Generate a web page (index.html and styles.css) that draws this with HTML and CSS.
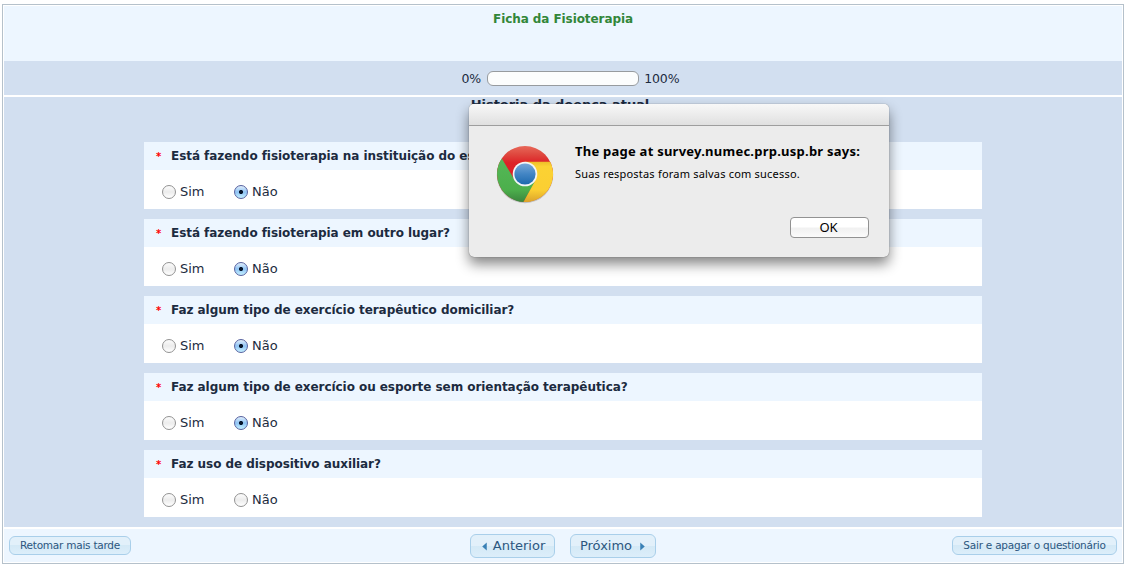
FILE: index.html
```html
<!DOCTYPE html>
<html lang="pt-BR">
<head>
<meta charset="utf-8">
<title>Ficha da Fisioterapia</title>
<link rel="stylesheet" href="styles.css">
</head>
<body>
<div class="survey">
  <header class="survey-header"><h1 class="survey-title">Ficha da Fisioterapia</h1></header>
  <div class="progress"><span class="progress-min">0%</span><span class="progress-track"></span><span class="progress-max">100%</span></div>
  <main class="group">
    <h2 class="group-title">Historia da doença atual</h2>
    <section class="question">
      <h3 class="question-head"><span class="required">*</span><span>Está fazendo fisioterapia na instituição do estudo?</span></h3>
      <div class="answers"><label class="answer"><span class="radio"></span>Sim</label><label class="answer"><span class="radio checked"></span>Não</label></div>
    </section>
    <section class="question">
      <h3 class="question-head"><span class="required">*</span><span>Está fazendo fisioterapia em outro lugar?</span></h3>
      <div class="answers"><label class="answer"><span class="radio"></span>Sim</label><label class="answer"><span class="radio checked"></span>Não</label></div>
    </section>
    <section class="question">
      <h3 class="question-head"><span class="required">*</span><span>Faz algum tipo de exercício terapêutico domiciliar?</span></h3>
      <div class="answers"><label class="answer"><span class="radio"></span>Sim</label><label class="answer"><span class="radio checked"></span>Não</label></div>
    </section>
    <section class="question">
      <h3 class="question-head"><span class="required">*</span><span>Faz algum tipo de exercício ou esporte sem orientação terapêutica?</span></h3>
      <div class="answers"><label class="answer"><span class="radio"></span>Sim</label><label class="answer"><span class="radio checked"></span>Não</label></div>
    </section>
    <section class="question">
      <h3 class="question-head"><span class="required">*</span><span>Faz uso de dispositivo auxiliar?</span></h3>
      <div class="answers"><label class="answer"><span class="radio"></span>Sim</label><label class="answer"><span class="radio"></span>Não</label></div>
    </section>
  </main>
  <footer class="survey-footer">
    <button class="btn btn-small btn-resume">Retomar mais tarde</button>
    <div class="pager">
      <button class="btn btn-prev"><svg class="arrow" viewBox="0 0 4 8"><path d="M4 .5v7L0 4z"/></svg>Anterior</button>
      <button class="btn btn-next">Próximo<svg class="arrow" viewBox="0 0 4 8"><path d="M0 .5v7L4 4z"/></svg></button>
    </div>
    <button class="btn btn-small btn-exit">Sair e apagar o questionário</button>
  </footer>
</div>

<div class="dialog" role="alertdialog">
  <div class="dialog-bar"></div>
  <div class="dialog-body">
    <svg class="chrome" viewBox="0 0 60 60">
      <defs>
        <linearGradient id="red" x1="0" y1="0" x2="0" y2="1"><stop offset="0" stop-color="#e8685a"/><stop offset=".14" stop-color="#df4a40"/><stop offset=".3" stop-color="#dd2227"/><stop offset="1" stop-color="#d81e26"/></linearGradient>
        <linearGradient id="green" x1="0" y1="0" x2="0" y2="1"><stop offset="0" stop-color="#55b857"/><stop offset=".72" stop-color="#4caf4c"/><stop offset="1" stop-color="#3b853e"/></linearGradient>
        <linearGradient id="yellow" x1="0" y1="0" x2="0" y2="1"><stop offset="0" stop-color="#edbd29"/><stop offset=".12" stop-color="#fbd233"/><stop offset=".7" stop-color="#fbcf32"/><stop offset="1" stop-color="#dba32c"/></linearGradient>
        <linearGradient id="blue" x1="0" y1="0" x2="0" y2="1"><stop offset="0" stop-color="#77a7d8"/><stop offset=".5" stop-color="#4285c4"/><stop offset="1" stop-color="#1d69ae"/></linearGradient>
      </defs>
      <circle cx="30" cy="31" r="28.2" fill="#000" opacity=".18"/>
      <circle cx="30" cy="30" r="28" fill="url(#red)"/>
      <path d="M6.8 14.4A28 28 0 0 0 28.5 58L40 38 19 35Z" fill="url(#green)"/>
      <path d="M30 17.7H55.2A28 28 0 0 1 28.5 58L39.5 38Z" fill="url(#yellow)"/>
      <circle cx="30" cy="30" r="12.3" fill="#f3f5f6"/>
      <circle cx="30" cy="30" r="10.6" fill="url(#blue)"/>
    </svg>
    <div class="dialog-content">
      <strong class="dialog-title">The page at survey.numec.prp.usp.br says:</strong>
      <p class="dialog-message">Suas respostas foram salvas com sucesso.</p>
      <button class="dialog-ok">OK</button>
    </div>
  </div>
</div>
</body>
</html>
```
FILE: styles.css
```css
* { box-sizing: border-box; }
body {
  margin: 0;
  height: 568px;
  overflow: hidden;
  padding: 4px 4px 0 2px;
  background: #fff;
  color: #1c2b40;
  font: 13px/16px "DejaVu Sans", sans-serif;
}
h1, h2, h3, p { margin: 0; font-size: inherit; }
button { margin: 0; font-family: inherit; }

.survey { width: 1122px; height: 560px; padding: 1px; border: 1px solid #b5c1cb; }
.survey-header { height: 55px; padding-top: 5px; background: #edf6ff; text-align: center; }
.survey-title { color: #328639; font-size: 12px; letter-spacing: -.08px; }
.progress { display: flex; justify-content: center; align-items: center; gap: 6px; height: 34px; padding-left: 15px; background: #d2dff0; }
.progress-min, .progress-max { padding-top: 2px; font-size: 12.5px; letter-spacing: -.1px; }
.progress-max { margin-left: -1px; }
.progress-track { width: 152px; height: 15px; border: 1px solid #979b9f; border-radius: 6px; background: #fcfdfd; }

.group { height: 430px; margin-top: 2px; background: #d2dff0; }
.group-title { height: 45px; padding-right: 6px; line-height: 15px; text-align: center; letter-spacing: -.05px; }
.question { width: 838px; height: 67px; margin: 0 0 10px 140px; background: #fff; }
.question-head { display: flex; height: 28px; padding: 6px 0 0 12px; background: #edf6ff; font-size: 12px; letter-spacing: -.05px; white-space: nowrap; }
.required { width: 15px; padding-top: 1px; color: #f00; font-size: 10px; }
.answers { display: flex; height: 39px; padding: 14px 0 0 18px; }
.answer { display: flex; width: 72px; gap: 4px; }
.radio { width: 14px; height: 14px; margin-top: 1px; border: 1px solid #929292; border-radius: 50%; background: linear-gradient(#fcfcfc, #ececec 50%, #fff); }
.radio.checked { border-color: #5762a0; background: radial-gradient(circle, #06152b 0 1.7px, transparent 2.4px), linear-gradient(#e0eefb, #8fc3f4 50%, #c4f0ff); }

.survey-footer { display: grid; grid-template-columns: 1fr auto 1fr; height: 33px; margin-top: 2px; padding: 5px; background: #edf6ff; }
.pager { display: flex; gap: 15px; }
.btn { display: flex; justify-content: center; height: 24px; padding: 3px 0 0; border: 1px solid #a9cfea; border-radius: 6px; background: linear-gradient(#e2f0fa 50%, #d4e9f6 50%, #dceefa); color: #2c577f; font-size: 13px; line-height: 16px; white-space: nowrap; }
.btn-small { height: 19px; margin-top: 2px; padding-top: 0; font-size: 10.5px; letter-spacing: -.24px; }
.btn-resume { width: 122px; }
.btn-exit { width: 165px; justify-self: end; }
.btn-prev { width: 85px; gap: 6px; padding-left: 2px; }
.btn-next { width: 86px; gap: 8px; padding-right: 1px; }
.arrow { width: 5px; height: 9px; margin-top: 4px; fill: #3980b5; }

.dialog { position: absolute; left: 469px; top: 104px; width: 420px; height: 153px; border-radius: 5px; background: #ececec; box-shadow: 0 0 1px rgba(0,0,0,.6), 0 7px 13px rgba(0,0,0,.48); color: #000; font-family: "Noto Sans", sans-serif; }
.dialog-bar { height: 22px; border-bottom: 1px solid #9e9e9e; border-radius: 5px 5px 0 0; background: linear-gradient(#f8f8f8, #e0e0e0); }
.dialog-body { display: flex; padding: 18px 20px 0 26px; gap: 20px; }
.chrome { width: 60px; height: 60px; flex: none; }
.dialog-content { display: flex; flex: 1; flex-direction: column; }
.dialog-title { height: 24px; margin-top: -1px; font-size: 13px; line-height: 16px; letter-spacing: .24px; white-space: nowrap; }
.dialog-message { height: 50px; font-size: 11px; line-height: 14px; letter-spacing: .2px; white-space: nowrap; }
.dialog-ok { align-self: flex-end; width: 79px; height: 21px; padding: 0 2px 1px 0; border: 1px solid #929292; border-radius: 4px; background: linear-gradient(#fff 45%, #f1f1f1 55%, #fbfbfb); color: #000; font-size: 13px; line-height: 17px; }
```
